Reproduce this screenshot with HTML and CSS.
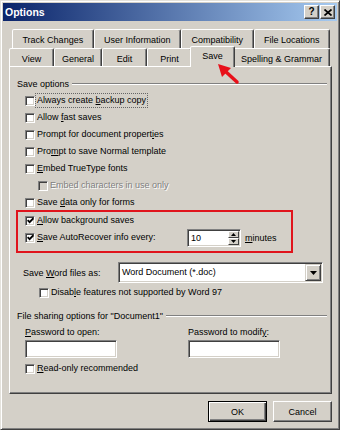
FILE: index.html
```html
<!DOCTYPE html>
<html>
<head>
<meta charset="utf-8">
<title>Options</title>
<link rel="stylesheet" href="styles.css">
</head>
<body>
<div class="window">
  <div class="titlebar">
    <span class="title">Options</span>
    <div class="tb-buttons">
      <span class="tb-btn help">?</span>
      <span class="tb-btn close"><svg width="8" height="7" viewBox="0 0 8 7"><path d="M0.5 0.5 L7.5 6.5 M7.5 0.5 L0.5 6.5" stroke="#000" stroke-width="1.7"/></svg></span>
    </div>
  </div>
  <div class="body">
    <div class="tab-row row1">
      <div class="tab">Track Changes</div>
      <div class="tab">User Information</div>
      <div class="tab">Compatibility</div>
      <div class="tab">File Locations</div>
    </div>
    <div class="tab-row row2">
      <div class="tab">View</div>
      <div class="tab">General</div>
      <div class="tab">Edit</div>
      <div class="tab">Print</div>
      <div class="tab active">Save</div>
      <div class="tab">Spelling &amp; Grammar</div>
    </div>
    <div class="panel">
      <div class="group-head"><span>Save options</span><span class="etch"></span></div>
      <div class="checks">
        <div class="cb-row"><span class="cb"></span><span class="lbl focus">Always create <u>b</u>ackup copy</span></div>
        <div class="cb-row"><span class="cb"></span><span class="lbl">Allow <u>f</u>ast saves</span></div>
        <div class="cb-row"><span class="cb"></span><span class="lbl">Prompt for document propert<u>i</u>es</span></div>
        <div class="cb-row"><span class="cb"></span><span class="lbl">Pro<u>m</u>pt to save Normal template</span></div>
        <div class="cb-row"><span class="cb"></span><span class="lbl"><u>E</u>mbed TrueType fonts</span></div>
        <div class="cb-row sub disabled"><span class="cb"></span><span class="lbl">Embed characters in use only</span></div>
        <div class="cb-row"><span class="cb"></span><span class="lbl">Save <u>d</u>ata only for forms</span></div>
      </div>
      <div class="highlight">
        <div class="cb-row"><span class="cb"><svg width="7" height="7" viewBox="0 0 7 7"><path d="M0.6 3.2 L2.6 5.2 L6.4 1.2" fill="none" stroke="#000" stroke-width="1.8"/></svg></span><span class="lbl"><u>A</u>llow background saves</span></div>
        <div class="cb-row"><span class="cb"><svg width="7" height="7" viewBox="0 0 7 7"><path d="M0.6 3.2 L2.6 5.2 L6.4 1.2" fill="none" stroke="#000" stroke-width="1.8"/></svg></span><span class="lbl auto-label"><u>S</u>ave AutoRecover info every:</span>
          <div class="spin"><span class="spin-val">10</span><span class="spin-btns"><span class="sb"><svg width="5" height="3" viewBox="0 0 5 3"><path d="M2.5 0 L5 3 L0 3 Z" fill="#000"/></svg></span><span class="sb"><svg width="5" height="3" viewBox="0 0 5 3"><path d="M0 0 L5 0 L2.5 3 Z" fill="#000"/></svg></span></span></div>
          <span class="minutes"><u>m</u>inutes</span>
        </div>
      </div>
      <div class="select-row">
        <span class="select-label">Save <u>W</u>ord files as:</span>
        <div class="select"><span class="select-val">Word Document (*.doc)</span><span class="select-btn"><svg width="7" height="4" viewBox="0 0 7 4"><path d="M0 0 L7 0 L3.5 4 Z" fill="#000"/></svg></span></div>
      </div>
      <div class="cb-row deep"><span class="cb"></span><span class="lbl">Disab<u>l</u>e features not supported by Word 97</span></div>
      <div class="group-head share"><span>File sharing options for "Document1"</span><span class="etch"></span></div>
      <div class="pw-grid">
        <div class="pw-col"><span class="pw-label"><u>P</u>assword to open:</span><span class="field"></span></div>
        <div class="pw-col"><span class="pw-label">Password to modif<u>y</u>:</span><span class="field"></span></div>
      </div>
      <div class="cb-row readonly"><span class="cb"></span><span class="lbl"><u>R</u>ead-only recommended</span></div>
    </div>
    <div class="buttons">
      <span class="btn default">OK</span>
      <span class="btn">Cancel</span>
    </div>
  </div>
  <svg class="arrow" width="26" height="24" viewBox="0 0 26 24"><path d="M9 9 L21 20" stroke="#e8101a" stroke-width="3.5" stroke-linecap="round"/><path d="M2 2 L15 6 L6 15 Z" fill="#e8101a"/></svg>
</div>
</body>
</html>
```

FILE: styles.css
```css
* { box-sizing: border-box; }
html, body { margin: 0; padding: 0; }
body {
  background: #d4d0c8;
  font-family: "Liberation Sans", Arial, sans-serif;
  font-size: 9px;
  color: #000;
}
u { text-decoration: underline; }

.window {
  position: relative;
  width: 340px;
  height: 430px;
  background: #d4d0c8;
  border: 1px solid;
  border-color: #e4e2dc #404040 #404040 #e4e2dc;
  box-shadow: inset 1px 1px #fff, inset -1px -1px #808080;
  padding: 2px;
  display: flex;
  flex-direction: column;
}

.titlebar {
  height: 18px;
  flex: none;
  display: flex;
  align-items: center;
  justify-content: space-between;
  background: linear-gradient(to right, #0a246a, #a6caf0);
  padding: 0 2px 0 2px;
}
.title { color: #fff; font-weight: bold; font-size: 10.5px; }
.tb-buttons { display: flex; gap: 1px; }
.tb-btn {
  width: 15px;
  height: 14px;
  background: #d4d0c8;
  border: 1px solid;
  border-color: #fff #404040 #404040 #fff;
  box-shadow: inset -1px -1px #808080;
  display: flex;
  align-items: center;
  justify-content: center;
  font-weight: bold;
  font-size: 10px;
  line-height: 12px;
}

.body {
  flex: 1;
  display: flex;
  flex-direction: column;
  padding: 8px 5px 5px 6px;
}

.tab-row { display: flex; flex: none; }
.row1 { height: 19px; margin: 0 2px 0 3px; }
.row2 { height: 18px; margin-right: 2px; }
.tab {
  flex: 1 1 auto;
  min-width: 45px;
  padding: 1px 7px 0;
  white-space: nowrap;
  display: flex;
  align-items: center;
  justify-content: center;
  border: 1px solid;
  border-bottom: none;
  border-color: #fff #404040 transparent #fff;
  box-shadow: inset -1px 0 #808080;
  border-radius: 2px 2px 0 0;
  background: #d4d0c8;
}
.row2 .tab { padding-top: 3px; }
.tab.active {
  position: relative;
  z-index: 2;
  margin: -2px -2px -1px;
  padding-top: 0;
  padding-bottom: 2px;
}

.panel {
  flex: 1;
  border: 1px solid;
  border-color: #fff #404040 #404040 #fff;
  box-shadow: inset -1px -1px #808080;
  padding: 11px 4px 0 7px;
  display: flex;
  flex-direction: column;
}

.group-head {
  display: flex;
  align-items: center;
  gap: 3px;
  height: 12px;
  white-space: nowrap;
}
.etch {
  flex: 1;
  height: 2px;
  border-top: 1px solid #808080;
  border-bottom: 1px solid #fff;
}

.checks { margin-top: 2px; display: flex; flex-direction: column; }
.cb-row {
  display: flex;
  align-items: center;
  height: 17px;
  padding-left: 8px;
  white-space: nowrap;
}
.cb-row.sub { padding-left: 21px; }
.cb {
  width: 10px;
  height: 10px;
  flex: none;
  background: #fff;
  border: 1px solid;
  border-color: #808080 #fff #fff #808080;
  box-shadow: inset 1px 1px #404040, inset -1px -1px #d4d0c8;
  display: flex;
  align-items: center;
  justify-content: center;
}
.cb svg { display: block; }
.lbl {
  border: 1px dotted transparent;
  padding: 0 1px;
  line-height: 13px;
}
.lbl.focus { border-color: #666; }
.disabled .cb { background: #d4d0c8; }
.disabled .lbl { color: #808080; text-shadow: 1px 1px #fff; }

.highlight {
  margin: -1px 0 0 -1px;
  width: 277px;
  border: 2px solid #e0141c;
  padding-bottom: 5px;
  display: flex;
  flex-direction: column;
}
.highlight .cb-row { padding-left: 7px; }
.auto-label { width: 152px; }
.spin {
  display: flex;
  width: 54px;
  height: 18px;
  flex: none;
  background: #fff;
  border: 1px solid;
  border-color: #808080 #fff #fff #808080;
  box-shadow: inset 1px 1px #404040, inset -1px -1px #d4d0c8;
  padding: 1px 1px 1px 3px;
}
.spin-val { flex: 1; line-height: 14px; }
.spin-btns { width: 11px; display: flex; flex-direction: column; }
.sb {
  flex: 1;
  background: #d4d0c8;
  border: 1px solid;
  border-color: #fff #404040 #404040 #fff;
  display: flex;
  align-items: center;
  justify-content: center;
}
.sb svg { display: block; }
.minutes { margin-left: 4px; }

.select-row {
  display: flex;
  align-items: center;
  height: 21px;
  margin-top: 9px;
  padding-left: 6px;
  white-space: nowrap;
}
.select-label { width: 95px; }
.select {
  width: 205px;
  height: 21px;
  display: flex;
  background: #fff;
  border: 1px solid;
  border-color: #808080 #fff #fff #808080;
  box-shadow: inset 1px 1px #404040, inset -1px -1px #d4d0c8;
  padding: 1px;
}
.select-val { flex: 1; padding-left: 2px; line-height: 17px; }
.select-btn {
  width: 16px;
  background: #d4d0c8;
  border: 1px solid;
  border-color: #d4d0c8 #404040 #404040 #d4d0c8;
  box-shadow: inset 1px 1px #fff, inset -1px -1px #808080;
  display: flex;
  align-items: center;
  justify-content: center;
}
.select-btn svg { display: block; }

.cb-row.deep { margin-top: 1px; padding-left: 22px; }
.group-head.share { margin-top: 9px; }

.pw-grid {
  display: grid;
  grid-template-columns: 163px 1fr;
  padding-left: 8px;
  margin-top: 4px;
}
.pw-col { display: flex; flex-direction: column; align-items: flex-start; gap: 2px; }
.pw-label { line-height: 12px; white-space: nowrap; }
.field {
  width: 92px;
  height: 18px;
  background: #fff;
  border: 1px solid;
  border-color: #808080 #fff #fff #808080;
  box-shadow: inset 1px 1px #404040, inset -1px -1px #d4d0c8;
}
.cb-row.readonly { margin-top: 2px; }

.buttons {
  display: flex;
  justify-content: flex-end;
  gap: 6px;
  margin-top: 7px;
  flex: none;
}
.btn {
  width: 59px;
  height: 21px;
  display: flex;
  align-items: center;
  justify-content: center;
  background: #d4d0c8;
  border: 1px solid;
  border-color: #fff #404040 #404040 #fff;
  box-shadow: inset -1px -1px #808080;
}
.btn.default {
  border-color: #000;
  box-shadow: inset 1px 1px #fff, inset -1px -1px #404040, inset -2px -2px #808080;
}

.arrow {
  position: absolute;
  left: 215px;
  top: 61px;
  z-index: 5;
}
```
